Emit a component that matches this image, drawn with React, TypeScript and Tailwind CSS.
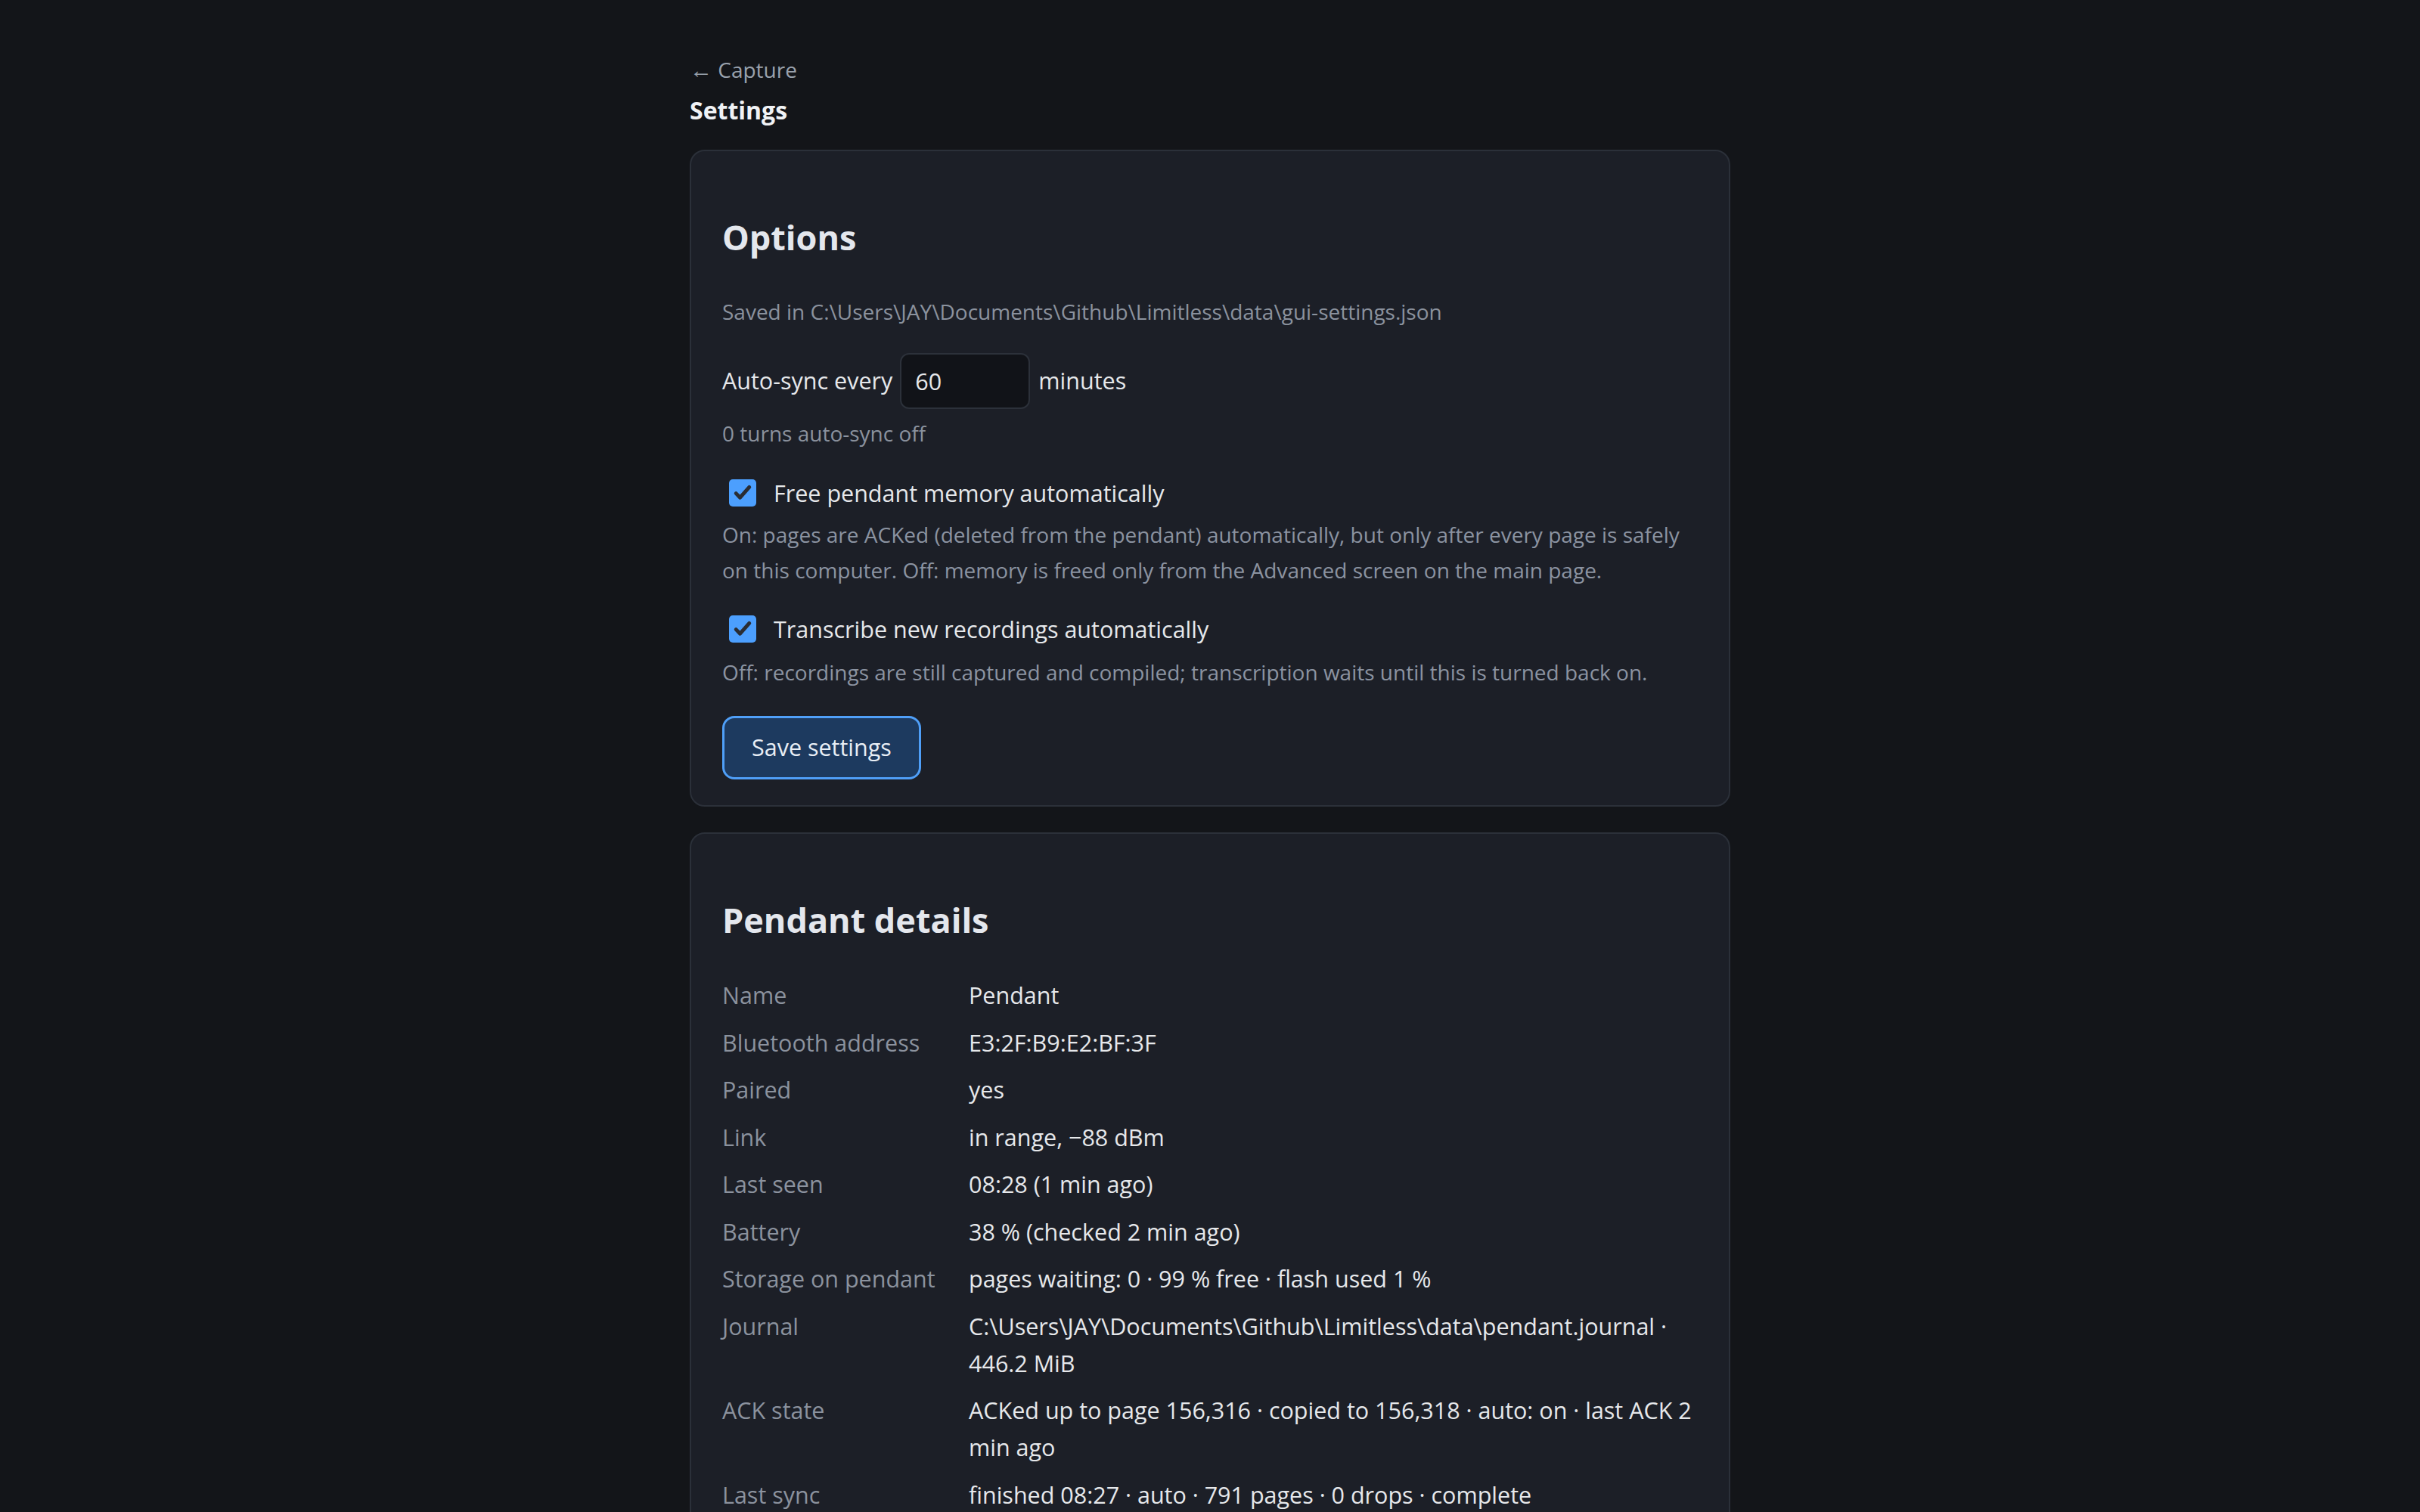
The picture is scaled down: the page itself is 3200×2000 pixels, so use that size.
import { useState } from 'react';

const font = { fontFamily: '"Open Sans", "Noto Sans", sans-serif' };

const details: { label: string; value: string }[] = [
  { label: 'Name', value: 'Pendant' },
  { label: 'Bluetooth address', value: 'E3:2F:B9:E2:BF:3F' },
  { label: 'Paired', value: 'yes' },
  { label: 'Link', value: 'in range, \u221288 dBm' },
  { label: 'Last seen', value: '08:28 (1 min ago)' },
  { label: 'Battery', value: '38 % (checked 2 min ago)' },
  { label: 'Storage on pendant', value: 'pages waiting: 0 \u00b7 99 % free \u00b7 flash used 1 %' },
  { label: 'Journal', value: 'C:\\Users\\JAY\\Documents\\Github\\Limitless\\data\\pendant.journal \u00b7 446.2 MiB' },
  { label: 'ACK state', value: 'ACKed up to page 156,316 \u00b7 copied to 156,318 \u00b7 auto: on \u00b7 last ACK 2 min ago' },
  { label: 'Last sync', value: 'finished 08:27 \u00b7 auto \u00b7 791 pages \u00b7 0 drops \u00b7 complete' },
];

const CheckRow = ({ checked, onToggle, label }: { checked: boolean; onToggle: () => void; label: string }) => (
  <label className="flex items-center h-[44px] cursor-pointer select-none">
    <span
      onClick={onToggle}
      className={`ml-[9px] w-[36px] h-[36px] rounded-[5px] flex items-center justify-center ${
        checked ? 'bg-[#4c9ffe]' : 'bg-[#12141a] border-2 border-[#3a404a]'
      }`}
    >
      {checked && (
        <svg viewBox="0 0 24 24" className="w-[28px] h-[28px]" fill="none">
          <path d="M4.5 12.5l4.6 4.8L19.5 5.5" stroke="#2a2d33" strokeWidth="4.2" strokeLinecap="round" strokeLinejoin="round" />
        </svg>
      )}
    </span>
    <span className="ml-[23px] text-[30.5px] leading-[44px] text-[#e6e8eb]">{label}</span>
  </label>
);

const App = () => {
  const [minutes, setMinutes] = useState('60');
  const [freeMemory, setFreeMemory] = useState(true);
  const [transcribe, setTranscribe] = useState(true);

  return (
    <div className="min-h-screen bg-[#131519] text-[#e6e8eb]" style={font}>
      <div className="w-[1376px] mx-auto pt-[72px] pb-[60px]">
        <a href="#" className="block text-[28px] leading-[40px] text-[#9aa2ad]">
          <span className="text-[30px]">←</span> Capture
        </a>
        <div className="mt-[12px] text-[32px] leading-[44px] font-bold text-[#f0f2f5]">Settings</div>

        {/* Options */}
        <section className="mt-[30px] bg-[#1c1f27] border-2 border-[#2b3039] rounded-[20px] px-[41px] pt-[82px] pb-[34px]">
          <h2 className="text-[45px] leading-[64px] font-bold text-[#e4e7ed]">Options</h2>
          <p className="mt-[46px] text-[28px] leading-[40px] text-[#8b929e]">
            Saved in C:\Users\JAY\Documents\Github\Limitless\data\gui-settings.json
          </p>
          <div className="mt-[35px] flex items-center text-[30.5px]">
            <span>Auto-sync every</span>
            <input
              value={minutes}
              onChange={(e) => setMinutes(e.target.value)}
              className="ml-[10px] w-[172px] h-[74px] bg-[#111318] border-2 border-[#2c313a] rounded-[12px] pl-[18px] text-[30.5px] text-[#e6e8eb] outline-none"
            />
            <span className="ml-[11px]">minutes</span>
          </div>
          <p className="mt-[12px] text-[28px] leading-[40px] text-[#8b929e]">0 turns auto-sync off</p>

          <div className="mt-[37px]">
            <CheckRow checked={freeMemory} onToggle={() => setFreeMemory(!freeMemory)} label="Free pendant memory automatically" />
          </div>
          <p className="mt-[10px] text-[28px] leading-[47px] text-[#8b93a1]">
            On: pages are ACKed (deleted from the pendant) automatically, but only after every page is safely on this
            computer. Off: memory is freed only from the Advanced screen on the main page.
          </p>

          <div className="mt-[32px]">
            <CheckRow checked={transcribe} onToggle={() => setTranscribe(!transcribe)} label="Transcribe new recordings automatically" />
          </div>
          <p className="mt-[12px] text-[28px] leading-[47px] text-[#8b93a1]">
            Off: recordings are still captured and compiled; transcription waits until this is turned back on.
          </p>

          <button className="mt-[34px] h-[84px] px-[36px] bg-[#1d3a5f] border-[3px] border-[#4f9ff8] rounded-[16px] text-[30.5px] text-[#e8eef5]">
            Save settings
          </button>
        </section>

        {/* Pendant details */}
        <section className="mt-[34px] bg-[#1c1f27] border-2 border-[#2b3039] rounded-[20px] px-[41px] pt-[82px] pb-[40px]">
          <h2 className="text-[45px] leading-[64px] font-bold text-[#e4e7ed]">Pendant details</h2>
          <dl className="mt-[43px] grid grid-cols-[326px_1fr] gap-y-[13.5px] text-[30.5px] leading-[49px]">
            {details.map((d) => (
              <div key={d.label} className="contents">
                <dt className="text-[#8b929e]">{d.label}</dt>
                <dd className="text-[#e6e8eb]">{d.value}</dd>
              </div>
            ))}
          </dl>
        </section>
      </div>
    </div>
  );
};

export default App;
